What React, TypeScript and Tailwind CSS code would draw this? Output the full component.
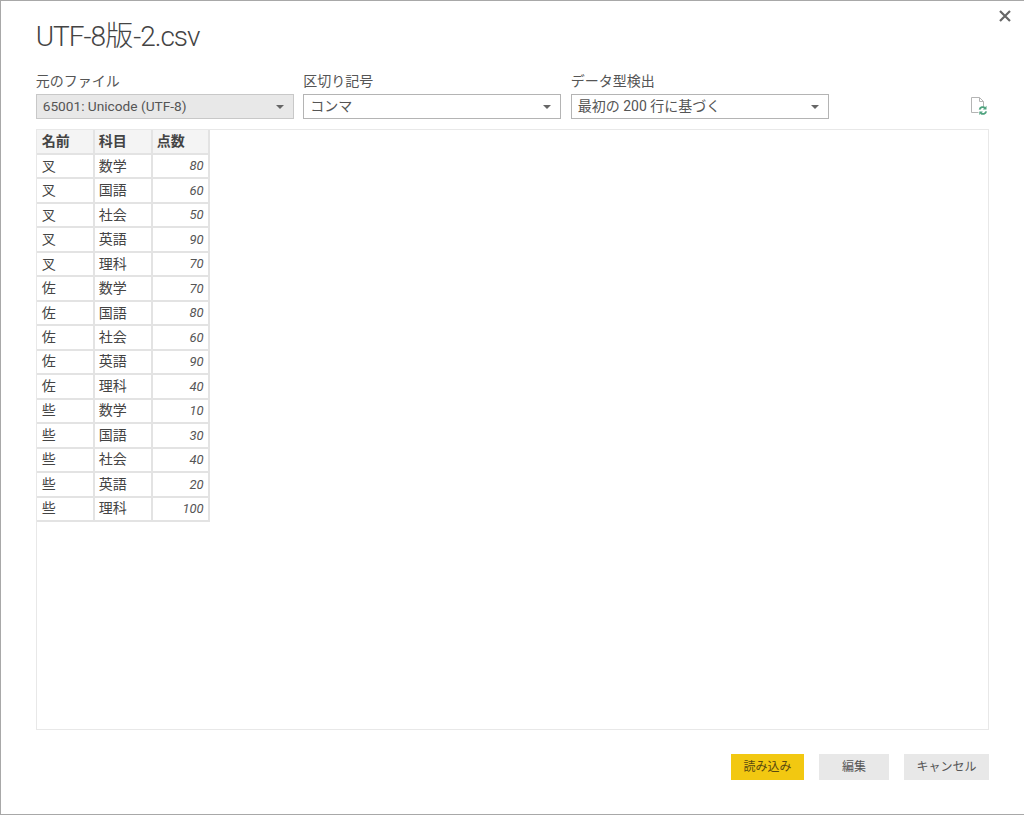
const rows = [
	["叉", "数学", 80],
	["叉", "国語", 60],
	["叉", "社会", 50],
	["叉", "英語", 90],
	["叉", "理科", 70],
	["佐", "数学", 70],
	["佐", "国語", 80],
	["佐", "社会", 60],
	["佐", "英語", 90],
	["佐", "理科", 40],
	["些", "数学", 10],
	["些", "国語", 30],
	["些", "社会", 40],
	["些", "英語", 20],
	["些", "理科", 100],
] as const;

function Caret() {
	return <span className="h-0 w-0 border-x-[4px] border-t-[4px] border-x-transparent border-t-[#666]" />;
}

function Select({ label, value, disabled }: { label: string; value: string; disabled?: boolean }) {
	return (
		<div className="flex w-[258px] flex-col">
			<label className="mb-[3px] h-[20px] text-[14px] leading-[20px] text-[#555]">{label}</label>
			<div
				className={`flex h-[25px] items-center justify-between border pr-[9px] pl-[6px] text-[#555] ${
					disabled ? "border-[#c8c8c8] bg-[#e8e8e8] text-[13.7px]" : "border-[#b4b4b4] bg-white text-[14px]"
				}`}
			>
				<span>{value}</span>
				<Caret />
			</div>
		</div>
	);
}

function FileRefresh() {
	return (
		<svg width="17" height="18" viewBox="0 0 17 18" fill="none">
			<path d="M.5.5h8l4 4v6M.5.5v15h7M8.5.5v4h4" stroke="#b4b4b4" strokeWidth="1" />
			<path d="M8.6 12.6a3.2 3.2 0 0 1 5.4-1.6" stroke="#4fa37f" strokeWidth="1.8" />
			<path d="M15.5 8.8v3.6h-3.6z" fill="#4fa37f" />
			<path d="M15.2 14.4a3.2 3.2 0 0 1-5.4 1.6" stroke="#4fa37f" strokeWidth="1.8" />
			<path d="M8.3 18v-3.6h3.6z" fill="#4fa37f" />
		</svg>
	);
}

function CloseIcon() {
	return (
		<svg width="12" height="12" viewBox="0 0 12 12" stroke="#666" strokeWidth="2.2">
			<path d="M1 1l10 10M11 1L1 11" />
		</svg>
	);
}

export default function App() {
	return (
		<div className="relative flex h-[815px] w-[1024px] flex-col overflow-hidden border-t border-b border-l border-[#a8a8a8] bg-white pt-[18px] pr-[35px] pl-[34.7px] font-['Roboto','Noto_Sans_CJK_JP',sans-serif]">
			<button className="absolute top-[9px] right-[13px]">
				<CloseIcon />
			</button>
			<h1 className="h-[36px] text-[28px] leading-[36px] font-light tracking-[-1px] text-[#444]">
				UTF-8<span className="tracking-normal">版</span>-2.csv
			</h1>
			<div className="mt-[16px] flex items-end">
				<div className="flex gap-[9.5px]">
					<Select label="元のファイル" value="65001: Unicode (UTF-8)" disabled />
					<Select label="区切り記号" value="コンマ" />
					<Select label="データ型検出" value="最初の 200 行に基づく" />
				</div>
				<div className="mr-[1px] mb-[4px] ml-auto">
					<FileRefresh />
				</div>
			</div>
			<div className="mt-[10px] h-[601px] border border-[#e8e8e8]">
				<table className="w-[172px] table-fixed border-collapse text-[14px] text-[#444]">
					<thead>
						<tr className="h-[24px] bg-[#f4f4f4]">
							<th className="w-[57px] border-r-2 border-b-2 border-[#e3e3e3] pl-[5px] text-left font-bold">名前</th>
							<th className="w-[58px] border-r-2 border-b-2 border-[#e3e3e3] pl-[4px] text-left font-bold">科目</th>
							<th className="w-[57px] border-r-2 border-b-2 border-[#e3e3e3] pl-[4px] text-left font-bold">点数</th>
						</tr>
					</thead>
					<tbody>
						{rows.map(([name, subject, score], idx) => (
							<tr key={idx} className="h-[24.47px]">
								<td className="border-r-2 border-b-2 border-[#e3e3e3] pl-[5px]">{name}</td>
								<td className="border-r-2 border-b-2 border-[#e3e3e3] pl-[4px]">{subject}</td>
								<td className="border-r-2 border-b-2 border-[#e3e3e3] pr-[4px] text-right text-[13px] text-[#555] italic">{score}</td>
							</tr>
						))}
					</tbody>
				</table>
			</div>
			<div className="mt-[24px] flex justify-end gap-[15px] text-[12px] text-[#555]">
				<button className="h-[26px] w-[73px] bg-[#f2c811] text-[#5a4a10]">読み込み</button>
				<button className="h-[26px] w-[70px] bg-[#e8e8e8]">編集</button>
				<button className="h-[26px] w-[85px] bg-[#e8e8e8]">キャンセル</button>
			</div>
		</div>
	);
}
